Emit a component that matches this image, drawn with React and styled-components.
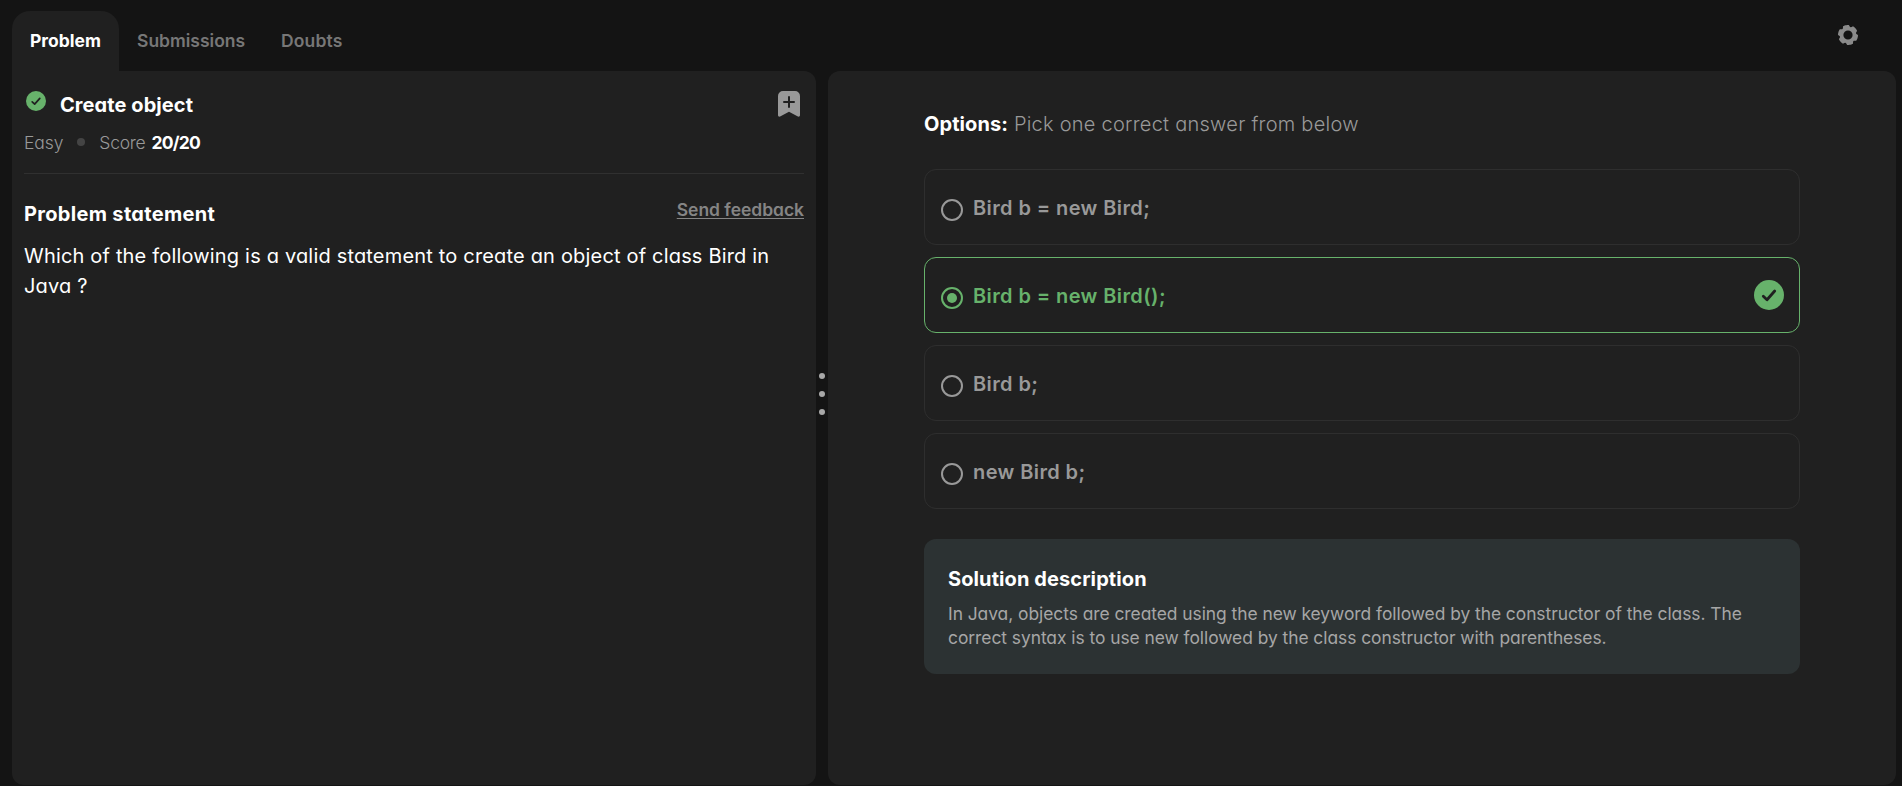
import React, { useState } from 'react';
import styled, { createGlobalStyle } from 'styled-components';

const GlobalStyle = createGlobalStyle`
  * { box-sizing: border-box; }
  body {
    margin: 0;
    overflow: hidden;
    background: #141414;
    color: #fff;
    font-family: Inter, 'Open Sans', sans-serif;
    font-feature-settings: 'cv11';
  }
  h1, h2, p { margin: 0; }
  button { font: inherit; font-feature-settings: inherit; background: none; border: 0; padding: 0; cursor: pointer; }
`;

const Page = styled.div`
  display: flex;
  flex-direction: column;
  height: 100vh;
  padding: 11px 6px 1px 12px;
`;

const TopBar = styled.header`
  display: flex;
  justify-content: space-between;
  height: 60px;
`;

const Tabs = styled.nav`
  display: flex;
`;

const Tab = styled.button`
  && {
    height: 60px;
    width: ${(p) => p.$width}px;
    padding: 0 0 2px 18px;
    text-align: left;
    white-space: nowrap;
    border-radius: 18px 18px 0 0;
    background: ${(p) => (p.$active ? '#202020' : 'transparent')};
    color: ${(p) => (p.$active ? '#fff' : '#777')};
    font-size: 17.5px;
    font-weight: ${(p) => (p.$active ? 650 : 600)};
    letter-spacing: ${(p) => p.$spacing}px;
  }
`;

const SettingsButton = styled.button`
  width: 20px;
  height: 20px;
  margin: 13.5px 38px 0 0;
  line-height: 0;
`;

const Split = styled.main`
  display: flex;
  flex: 1;
  min-height: 0;
`;

const Panel = styled.section`
  border-radius: ${(p) => (p.$first ? '0 12px 12px 12px' : '12px')};
  background: #202020;
`;

const ProblemPanel = styled(Panel)`
  width: 804px;
  padding: 0 12px;
`;

const AnswerPanel = styled(Panel)`
  flex: 1;
  padding: 38px 96px 0;
`;

const Handle = styled.div`
  display: flex;
  flex-direction: column;
  align-items: center;
  gap: 12.2px;
  width: 12px;
  padding-top: 301.6px;
`;

const HandleDot = styled.span`
  width: 6px;
  height: 6px;
  border-radius: 50%;
  background: #a8a8a8;
`;

const ProblemHead = styled.div`
  display: flex;
  justify-content: space-between;
  height: 103px;
  border-bottom: 1px solid #303030;
`;

const TitleRow = styled.div`
  display: flex;
  padding: 20px 0 0 2px;
`;

const Heading = styled.h2`
  font-size: 20px;
  line-height: 28px;
  font-weight: 650;
  letter-spacing: ${(p) => p.$spacing}px;
`;

const Title = styled(Heading)`
  margin: 0 0 0 14px;
`;

const BookmarkButton = styled.button`
  width: 22px;
  height: 26px;
  margin: 20px 4px 0 0;
  line-height: 0;
`;

const Meta = styled.div`
  display: flex;
  align-items: center;
  margin-top: 11px;
  height: 24px;
  font-size: 17.5px;
  font-weight: 330;
  color: #999;
`;

const Difficulty = styled.span`
  letter-spacing: -0.1px;
`;

const Dot = styled.span`
  width: 8px;
  height: 8px;
  margin: 0 14px;
  border-radius: 50%;
  background: #444;
`;

const ScoreLabel = styled.span`
  letter-spacing: -0.25px;
  margin-right: 6px;
`;

const Score = styled.strong`
  font-weight: 650;
  letter-spacing: -0.75px;
  color: #fff;
`;

const StatementHead = styled.div`
  display: flex;
  justify-content: space-between;
  padding-top: 26px;
`;

const FeedbackLink = styled.a`
  font-size: 17.5px;
  line-height: 20px;
  font-weight: 600;
  letter-spacing: -0.04px;
  color: #858585;
  text-decoration: underline;
  text-decoration-thickness: 1px;
  text-underline-offset: 1.5px;
`;

const Statement = styled.p`
  margin-top: 12.5px;
  font-size: 20px;
  line-height: 30px;
  letter-spacing: 0.18px;
`;

const Prompt = styled.p`
  font-size: 20px;
  line-height: 30px;
  font-weight: 330;
  color: #999;
  letter-spacing: 0.25px;

  strong {
    font-weight: 650;
    color: #fff;
    letter-spacing: 0.08px;
  }
`;

const OptionList = styled.div`
  display: flex;
  flex-direction: column;
  gap: 12px;
  margin-top: 30px;
`;

const Option = styled.button`
  && {
    display: flex;
    align-items: center;
    height: 76px;
    padding: 0 15px 0 16px;
    border: 1px solid ${(p) => (p.$selected ? '#67b26b' : '#2e2e2e')};
    border-radius: 12px;
    color: ${(p) => (p.$selected ? '#67b26b' : '#999')};
    text-align: left;
  }
`;

const Radio = styled.span`
  display: flex;
  align-items: center;
  justify-content: center;
  width: 22px;
  height: 22px;
  margin-top: 6px;
  border: 2px solid currentColor;
  border-radius: 50%;

  &::after {
    content: '';
    width: 10px;
    height: 10px;
    border-radius: 50%;
    background: ${(p) => (p.$selected ? 'currentColor' : 'transparent')};
  }
`;

const OptionLabel = styled.span`
  flex: 1;
  margin-left: 10px;
  padding-top: 2px;
  font-size: 20px;
  line-height: 28px;
  font-weight: 600;
  letter-spacing: 0.4px;
`;

const Solution = styled.div`
  height: 135px;
  margin-top: 30px;
  padding: 26px 24px 0;
  border-radius: 12px;
  background: #2c3233;
`;

const SolutionText = styled.p`
  margin-top: 8.5px;
  font-size: 17.4px;
  line-height: 24px;
  letter-spacing: -0.04px;
  color: #a6a6a6;
`;

const GEAR = Array.from({ length: 72 }, (_, i) => {
  const a = (i * 5 * Math.PI) / 180;
  const c = Math.cos(6 * (a + (102 * Math.PI) / 180));
  const r = c > -0.3 ? 10 : 10 - 1.9 * ((-c - 0.3) / 0.7);
  return `${i ? 'L' : 'M'}${(10 + r * Math.cos(a)).toFixed(2)} ${(10 + r * Math.sin(a)).toFixed(2)}`;
}).join('');

function GearIcon() {
  return (
    <svg width="20" height="20" viewBox="0 0 20 20">
      <path
        fill="#8a8a8a"
        fillRule="evenodd"
        d={`${GEAR}ZM14.6 10a4.6 4.6 0 1 0-9.2 0a4.6 4.6 0 1 0 9.2 0Z`}
      />
    </svg>
  );
}

function BookmarkIcon() {
  return (
    <svg width="22" height="26" viewBox="0 0 22 26">
      <path fill="#999" d="M5 0h12a5 5 0 0 1 5 5v19c0 1.6-1.2 2.2-2.6 1.3L11 20.8l-8.400 4.500C1.200 26.200 0 25.600 0 24V5a5 5 0 0 1 5-5Z" />
      <path stroke="#202020" strokeWidth="2" strokeLinecap="round" d="M11 6v10M6 11h10" />
    </svg>
  );
}

function CheckIcon({ size, small }) {
  return (
    <svg width={size} height={size} viewBox="0 0 30 30">
      <circle cx="15" cy="15" r="15" fill="#67b26b" />
      <path
        fill="none"
        stroke="#202020"
        strokeWidth={small ? 2.6 : 2.8}
        strokeLinecap="round"
        strokeLinejoin="round"
        d="M9.3 16.2l3.7 3.5 7.7-8.7"
      />
    </svg>
  );
}

const TABS = [
  { label: 'Problem', width: 107, spacing: 0 },
  { label: 'Submissions', width: 144, spacing: 0 },
  { label: 'Doubts', width: 98, spacing: 0.15 },
];

const OPTIONS = ['Bird b = new Bird;', 'Bird b = new Bird();', 'Bird b;', 'new Bird b;'];

export default function App() {
  const [tab, setTab] = useState(0);
  return (
    <Page>
      <GlobalStyle />
      <TopBar>
        <Tabs>
          {TABS.map((t, i) => (
            <Tab key={t.label} $active={i === tab} $width={t.width} $spacing={t.spacing} onClick={() => setTab(i)}>
              {t.label}
            </Tab>
          ))}
        </Tabs>
        <SettingsButton aria-label="Settings">
          <GearIcon />
        </SettingsButton>
      </TopBar>
      <Split>
        <ProblemPanel $first>
          <ProblemHead>
            <div>
              <TitleRow>
                <CheckIcon size={20} small />
                <Title as="h1" $spacing={0.08}>Create object</Title>
              </TitleRow>
              <Meta>
                <Difficulty>Easy</Difficulty>
                <Dot />
                <ScoreLabel>Score</ScoreLabel>
                <Score>20/20</Score>
              </Meta>
            </div>
            <BookmarkButton aria-label="Bookmark">
              <BookmarkIcon />
            </BookmarkButton>
          </ProblemHead>
          <StatementHead>
            <Heading $spacing={0.32}>Problem statement</Heading>
            <FeedbackLink>Send feedback</FeedbackLink>
          </StatementHead>
          <Statement>
            Which of the following is a valid statement to create an object of class Bird in Java ?
          </Statement>
        </ProblemPanel>
        <Handle>
          <HandleDot />
          <HandleDot />
          <HandleDot />
        </Handle>
        <AnswerPanel>
          <Prompt>
            <strong>Options:</strong> Pick one correct answer from below
          </Prompt>
          <OptionList>
            {OPTIONS.map((text, i) => (
              <Option key={text} $selected={i === 1}>
                <Radio $selected={i === 1} />
                <OptionLabel>{text}</OptionLabel>
                {i === 1 && <CheckIcon size={30} />}
              </Option>
            ))}
          </OptionList>
          <Solution>
            <Heading $spacing={0.1}>Solution description</Heading>
            <SolutionText>
              In Java, objects are created using the new keyword followed by the constructor of the class. The
              correct syntax is to use new followed by the class constructor with parentheses.
            </SolutionText>
          </Solution>
        </AnswerPanel>
      </Split>
    </Page>
  );
}
